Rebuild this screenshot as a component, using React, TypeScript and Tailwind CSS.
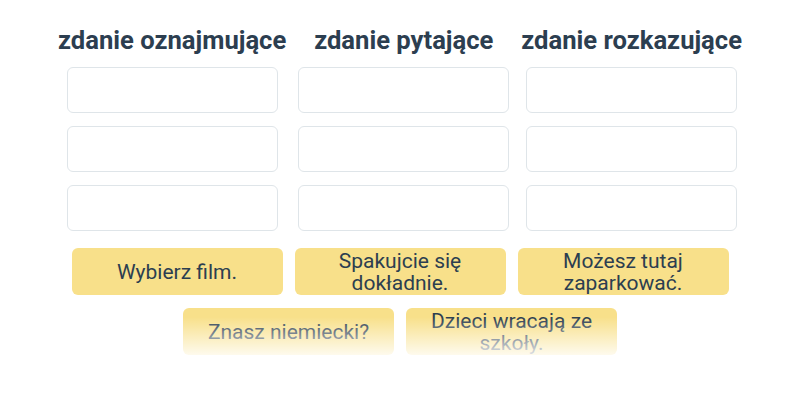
import React from 'react'

const columns = ['zdanie oznajmujące', 'zdanie pytające', 'zdanie rozkazujące']

const cards = [
  'Wybierz film.',
  'Spakujcie się dokładnie.',
  'Możesz tutaj zaparkować.',
  'Znasz niemiecki?',
  'Dzieci wracają ze szkoły.',
]

function Card({ text }: { text: string }) {
  return (
    <div className="w-[211px] h-[47px] rounded-[6px] bg-[#f8e08a] flex items-center justify-center px-4 text-center text-[21px] leading-[22px] text-[#2c3e50]">
      {text}
    </div>
  )
}

export default function App() {
  return (
    <div
      className="w-[800px] h-[400px] bg-white"
      style={{ fontFamily: 'Roboto, "Noto Sans", sans-serif' }}
    >
      {/* Columns */}
      <div className="flex justify-center gap-3 pt-6">
        {columns.map((title) => (
          <div key={title} className="flex flex-col items-center">
            <h2 className="text-[25.6px] leading-8 font-bold text-[#2c3e50] whitespace-nowrap">{title}</h2>
            <div className="mt-[11px] flex flex-col gap-[13px]">
              {[0, 1, 2].map((i) => (
                <div key={i} className="w-[211px] h-[46px] rounded-[6px] border border-[#dfe5e9] bg-white" />
              ))}
            </div>
          </div>
        ))}
      </div>

      {/* Cards pool */}
      <div className="relative mt-[17px] mx-auto w-[660px] flex flex-wrap justify-center gap-x-3 gap-y-[13px]">
        {cards.map((c) => (
          <Card key={c} text={c} />
        ))}
        <div className="pointer-events-none absolute left-0 right-0 bottom-0 h-[38px] bg-gradient-to-b from-white/0 to-white/85" />
      </div>
    </div>
  )
}
